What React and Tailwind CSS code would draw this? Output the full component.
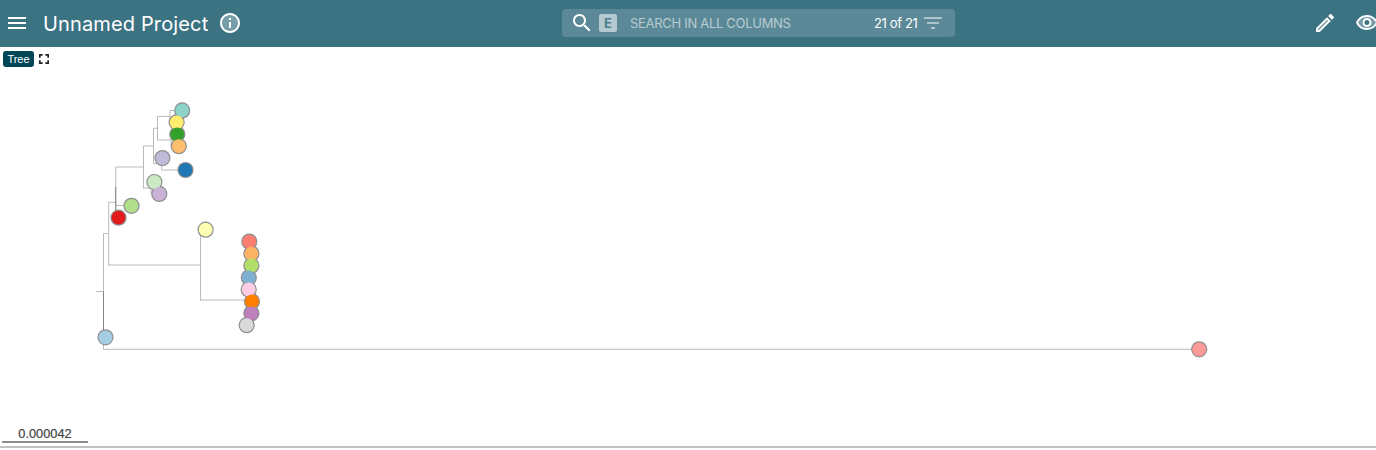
import React from "react";

const BRANCHES = [
  "M96 291.5H103.5M103.5 233.5V349.5M103.5 233.5H108.5M108.7 202.2V265.5",
  "M108.5 202.2H115.8M115.8 167V217.5M115.5 205.5H131M115.5 217.5H118M116 167H143.5",
  "M143.5 146V188.5M143.5 146H153.5M153.5 128.2V163.7M153.5 128.2H157.5M157.5 116.4V140",
  "M157.5 116.4H170M170 110.5V122.5M170 110.5H182M157.5 140H171M171 134V146",
  "M153.5 163.7H161.6M161.6 158V170M161.5 170H185M143.5 188H151M151 182V194H159",
  "M108.5 265H200.5M200.5 230V300.5M200.5 300H247M247 242V325",
  "M103.5 349.3H1199",
];

const LEAVES = [
  [182.2, 110.4, "#8dd3c7"],
  [176.6, 122.3, "#ffed6f"],
  [177.3, 134.3, "#33a02c"],
  [178.8, 146.2, "#fdbf6f"],
  [162.4, 158.1, "#bebada"],
  [185.5, 170, "#1f78b4"],
  [154.4, 182, "#ccebc5"],
  [159.3, 193.9, "#cab2d6"],
  [131.5, 205.8, "#b2df8a"],
  [118.5, 217.7, "#e31a1c"],
  [205.6, 229.7, "#ffffb3"],
  [249.3, 241.6, "#fb8072"],
  [251.4, 253.6, "#fdb462"],
  [251.4, 265.5, "#b3de69"],
  [248.8, 277.5, "#80b1d3"],
  [248.7, 289.4, "#fccde5"],
  [252, 301.4, "#ff7f00"],
  [251.4, 313.3, "#bc80bd"],
  [246.7, 325.2, "#d9d9d9"],
  [105.5, 337.3, "#a6cee3"],
  [1199.2, 349.3, "#fb9a99"],
];

function Icon({ className, children }) {
  return (
    <svg viewBox="0 0 24 24" fill="currentColor" className={`shrink-0 ${className}`}>
      {children}
    </svg>
  );
}

function Header() {
  return (
    <header className="flex h-[47px] shrink-0 items-center overflow-hidden bg-[#3c7383] font-['Inter',sans-serif] text-white">
      <Icon className="-mt-px ml-[5px] size-6">
        <path d="M3 18h18v-2H3v2zm0-5h18v-2H3v2zm0-7v2h18V6H3z" />
      </Icon>
      <h1 className="ml-[14px] w-[165px] whitespace-nowrap text-[20px] leading-6 tracking-[0.14px]">
        Unnamed Project
      </h1>
      <Icon className="ml-[10px] -mt-px size-6">
        <circle cx="12" cy="12" r="9" opacity=".3" />
        <path d="M11 7h2v2h-2zm0 4h2v6h-2zm1-9C6.48 2 2 6.48 2 12s4.48 10 10 10 10-4.48 10-10S17.52 2 12 2zm0 18c-4.41 0-8-3.59-8-8s3.59-8 8-8 8 3.59 8 8-3.59 8-8 8z" />
      </Icon>
      <div className="ml-[320px] mt-[-1px] flex h-7 w-[393px] shrink-0 items-center rounded bg-[#5b8997]">
        <Icon className="ml-2 -mt-px size-6">
          <path d="M15.5 14h-.79l-.28-.27C15.41 12.59 16 11.11 16 9.5 16 5.91 13.09 3 9.5 3S3 5.91 3 9.5 5.91 16 9.5 16c1.61 0 3.09-.59 4.23-1.57l.27.28v.79l5 4.99L20.49 19l-4.99-5zm-6 0C7.01 14 5 11.99 5 9.5S7.01 5 9.5 5 14 7.01 14 9.5 11.99 14 9.5 14z" />
        </Icon>
        <span className="ml-[5px] flex h-[18px] w-[18px] items-center justify-center rounded-[2px] bg-[#b5cad0] text-[13px] font-bold leading-none text-[#4b7e8d]">
          E
        </span>
        <span className="ml-[13px] mt-[2px] w-[244px] whitespace-nowrap text-[13px] tracking-[-0.3px] text-[#b8ccd2]">
          SEARCH IN ALL COLUMNS
        </span>
        <span className="mt-[2px] w-[47px] whitespace-nowrap text-[13px] tracking-[-0.35px]">21 of 21</span>
        <Icon className="size-6 text-[#adc4cb]">
          <path d="M10 18h4v-2h-4v2zM3 6v2h18V6H3zm3 7h12v-2H6v2z" />
        </Icon>
      </div>
      <Icon className="ml-[358px] -mt-px size-6">
        <path d="M5 18.08V19h.92l9.06-9.06-.92-.92z" opacity=".3" />
        <path d="M20.71 7.04c.39-.39.39-1.02 0-1.41l-2.34-2.34c-.2-.2-.45-.29-.71-.29s-.51.1-.7.29l-1.83 1.83 3.75 3.75 1.83-1.83zM3 17.25V21h3.75L17.81 9.94l-3.75-3.75L3 17.25zM5.92 19H5v-.92l9.06-9.06.92.92L5.92 19z" />
      </Icon>
      <Icon className="ml-[18px] -mt-px size-6">
        <path d="M12 6a9.77 9.77 0 0 0-8.82 5.5 9.77 9.77 0 0 0 17.64 0A9.77 9.77 0 0 0 12 6zm0 10a4.5 4.5 0 1 1 0-9 4.5 4.5 0 0 1 0 9z" opacity=".3" />
        <path d="M12 4C7 4 2.73 7.11 1 11.5 2.73 15.89 7 19 12 19s9.27-3.11 11-7.5C21.27 7.11 17 4 12 4zm0 13a9.77 9.77 0 0 1-8.82-5.5C4.83 8.13 8.21 6 12 6s7.17 2.13 8.82 5.5A9.77 9.77 0 0 1 12 17zm0-10a4.5 4.5 0 1 0 0 9 4.5 4.5 0 0 0 0-9zm0 7a2.5 2.5 0 1 1 0-5 2.5 2.5 0 0 1 0 5z" />
      </Icon>
    </header>
  );
}

function Tree() {
  return (
    <svg viewBox="0 71 1376 354" className="block h-[354px] w-full shrink-0">
      {BRANCHES.map((d) => (
        <path key={d} d={d} fill="none" stroke="#bababa" strokeWidth="1" />
      ))}
      <path d="M103.5 291.5V337M115.7 187V217" fill="none" stroke="#858585" />
      {LEAVES.map(([x, y]) => (
        <circle key={y} cx={x} cy={y} r="8.1" fill="#8f8f8f" />
      ))}
      {LEAVES.map(([x, y, color]) => (
        <circle key={y} cx={x} cy={y} r="6.9" fill={color} />
      ))}
    </svg>
  );
}

export default function App() {
  return (
    <div className="flex h-[450px] w-full flex-col overflow-hidden bg-white">
      <Header />
      <div className="flex h-6 shrink-0 items-start pl-[3px] pt-1">
        <span className="flex h-4 w-[31px] items-center justify-center rounded-[3px] bg-[#004657] font-['Liberation_Sans',sans-serif] text-[11px] leading-4 text-white">
          Tree
        </span>
        <Icon className="ml-[2px] size-4 text-[#222]">
          <path d="M4.5 4.5h5.5v2.5h-3v3h-2.5zM14 4.5h5.5v5.5h-2.5v-3h-3zM4.5 14h2.5v3h3v2.5h-5.5zM17 14h2.5v5.5h-5.5v-2.5h3z" />
        </Icon>
      </div>
      <Tree />
      <div className="flex h-[21px] shrink-0 flex-col pl-[2px]">
        <div className="h-4 w-[86px] text-center font-['Liberation_Sans',sans-serif] text-[12.8px] leading-[18px] text-[#444] [-webkit-text-stroke:0.2px_#444]">
          0.000042
        </div>
        <div className="h-[2px] w-[86px] bg-[#8c8c8c]" />
      </div>
      <div className="h-[2px] shrink-0 bg-[#c0c0c0]" />
    </div>
  );
}
